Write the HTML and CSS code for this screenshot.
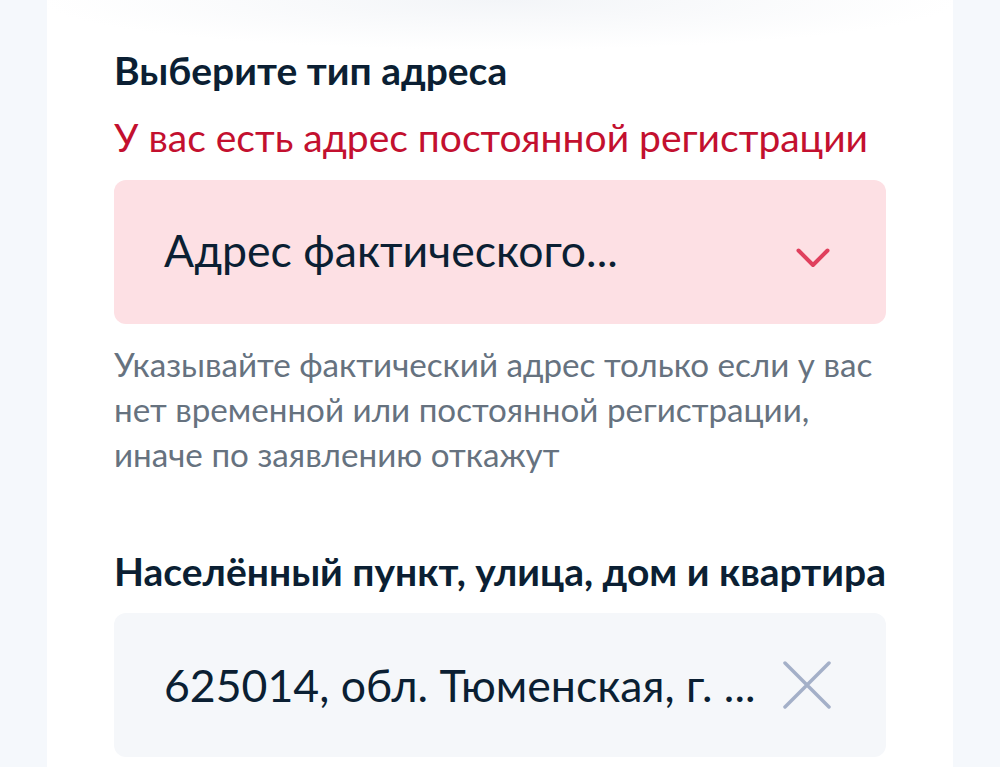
FILE: index.html
```html
<!DOCTYPE html>
<html lang="ru">
<head>
<meta charset="utf-8">
<link rel="stylesheet" href="styles.css">
</head>
<body>
<div class="page">
  <main class="card">
    <h2 class="label">Выберите тип адреса</h2>
    <p class="error">У вас есть адрес постоянной регистрации</p>
    <div class="field field-error">
      <span class="value">Адрес фактического...</span>
      <svg class="icon chevron" width="34" height="20" viewBox="0 0 34 20"><path d="M2.5 2.5 L17 17 L31.5 2.5" fill="none" stroke="#e0405d" stroke-width="4" stroke-linecap="round" stroke-linejoin="round"/></svg>
    </div>
    <p class="hint">Указывайте фактический адрес только если у вас нет временной или постоянной регистрации, иначе по заявлению откажут</p>
    <h2 class="label label-2">Населённый пункт, улица, дом и квартира</h2>
    <div class="field field-plain">
      <span class="value">625014, обл. Тюменская, г. ...</span>
      <svg class="icon cross" width="48" height="48" viewBox="0 0 48 48"><path d="M2 2 L46 46 M46 2 L2 46" fill="none" stroke="#a4b0c8" stroke-width="3.5" stroke-linecap="round"/></svg>
    </div>
  </main>
</div>
</body>
</html>
```
FILE: styles.css
```css
html, body {
  margin: 0;
  padding: 0;
  background: #f5f8fc;
}
body {
  font-family: Lato, "Noto Sans", sans-serif;
  color: #0b1f33;
}
.page {
  display: flex;
  justify-content: center;
  height: 767px;
  overflow: hidden;
}
.card {
  width: 906px;
  box-sizing: border-box;
  background: radial-gradient(ellipse 460px 50px at 50% 0, #f3f5f8 0%, #ffffff 100%);
  padding: 46px 67px 0 67px;
}
.label {
  margin: 0;
  font-size: 39px;
  font-weight: 700;
  line-height: 48px;
  color: #0b1f33;
  white-space: nowrap;
}
.error {
  margin: 19px 0 0 0;
  font-size: 39px;
  line-height: 48px;
  color: #c3102f;
  white-space: nowrap;
}
.field {
  margin-top: 19px;
  height: 144px;
  border-radius: 12px;
  display: flex;
  align-items: center;
  justify-content: space-between;
  padding: 0 55px 0 50px;
  box-sizing: border-box;
}
.field-error {
  background: #fde0e4;
}
.field-plain {
  background: #f5f7fa;
  margin-top: 18px;
}
.value {
  font-size: 44.6px;
  line-height: 54px;
  color: #0b1f33;
  white-space: nowrap;
}
.field-error .value {
  margin-top: -4px;
}
.chevron {
  margin-top: 12px;
  margin-right: 1px;
}
.hint {
  margin: 18px 0 0 0;
  font-size: 33.2px;
  line-height: 45px;
  color: #66727f;
}
.label-2 {
  margin-top: 70px;
}
```
